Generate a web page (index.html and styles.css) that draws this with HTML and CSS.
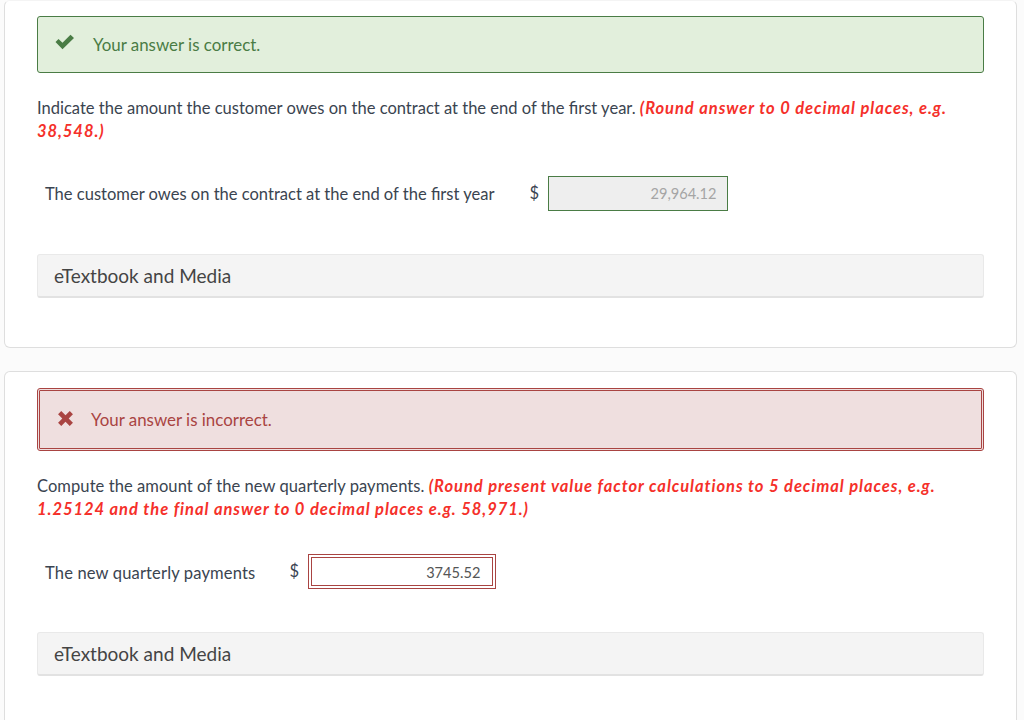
FILE: index.html
```html
<!DOCTYPE html>
<html lang="en">
<head>
<meta charset="utf-8">
<title>Answers</title>
<link rel="stylesheet" href="styles.css">
</head>
<body>
<section class="card card-first">
  <div class="alert alert-ok">
    <svg class="icon icon-check" viewBox="0 0 20 16" aria-hidden="true"><path d="M0.5 8 L3.5 5 L7.5 8.8 L15.5 0.8 L19 4 L7.5 15.2 Z"/></svg>
    <span class="alert-text">Your answer is correct.</span>
  </div>
  <p class="question">Indicate the amount the customer owes on the contract at the end of the first year. <em class="hint">(Round answer to 0 decimal places, e.g. 38,548.)</em></p>
  <div class="answer-row">
    <span class="answer-label">The customer owes on the contract at the end of the first year</span>
    <span class="dollar">$</span>
    <div class="field field-ok">29,964.12</div>
  </div>
  <div class="media">eTextbook and Media</div>
</section>
<section class="card card-second">
  <div class="alert alert-bad">
    <svg class="icon icon-cross" viewBox="0 0 16 16" aria-hidden="true"><path d="M1 4 L4 1 L8 5 L12 1 L15 4 L11 8 L15 12 L12 15 L8 11 L4 15 L1 12 L5 8 Z"/></svg>
    <span class="alert-text">Your answer is incorrect.</span>
  </div>
  <p class="question">Compute the amount of the new quarterly payments. <em class="hint">(Round present value factor calculations to 5 decimal places, e.g. 1.25124 and the final answer to 0 decimal places e.g. 58,971.)</em></p>
  <div class="answer-row">
    <span class="answer-label">The new quarterly payments</span>
    <span class="dollar">$</span>
    <div class="field field-bad">3745.52</div>
  </div>
  <div class="media">eTextbook and Media</div>
</section>
</body>
</html>
```
FILE: styles.css
```css
html, body {
  margin: 0;
  height: 720px;
  overflow: hidden;
}
body {
  background: #fbfbfb;
  padding: 0 7px 0 4px;
  font-family: Lato, "Liberation Sans", sans-serif;
  font-size: 16.55px;
  line-height: 23px;
  color: #3a4450;
}
.card {
  background: #fff;
  border: 1px solid #dedede;
  border-radius: 6px;
  padding: 0 32px;
  box-sizing: border-box;
}
.card-first {
  height: 348px;
  padding-top: 15px;
  border-top-color: #f4f4f4;
}
.card-first .dollar { margin-left: 35px; }
.card-second {
  margin-top: 23px;
  height: 349px;
  padding-top: 16px;
  border-bottom: none;
  border-radius: 6px 6px 0 0;
}
.card-second .question { letter-spacing: 0.06px; }
.card-second .answer-label { letter-spacing: 0.15px; margin-top: 4px; }
.alert {
  display: flex;
  align-items: center;
  box-sizing: border-box;
  border-radius: 3px;
  font-size: 16.9px;
}
.alert-ok {
  height: 57px;
  padding-left: 17px;
  background: #e2efdc;
  border: 1px solid #4a7c45;
  color: #4a7c45;
}
.alert-ok .alert-text { margin-left: 18px; }
.alert-bad {
  height: 63px;
  padding-left: 17px;
  background: #efdfdf;
  border: 3px double #a94442;
  color: #a94442;
}
.alert-bad .alert-text { margin-left: 17px; }
.icon { display: block; fill: currentColor; }
.icon-check { width: 20px; height: 16px; margin-top: -6px; }
.icon-cross { width: 17px; height: 17px; margin-top: -2px; }
.question { margin: 24px 0 0; }
.hint {
  font-weight: 700;
  font-style: italic;
  color: #f5302a;
  letter-spacing: 0.93px;
}
.answer-row {
  display: flex;
  align-items: center;
  height: 35px;
  margin-top: 33px;
  padding-left: 8px;
}
.answer-label { margin-top: 2px; }
.dollar { margin-left: 34px; width: 19px; }
.field {
  box-sizing: border-box;
  height: 35px;
  line-height: 34px;
  text-align: right;
  font-size: 14.6px;
}
.field-ok {
  width: 180px;
  padding-right: 11px;
  background: #eee;
  border: 1px solid #4a7c45;
  color: #a5a5a5;
}
.field-bad {
  width: 188px;
  padding-right: 12px;
  background: #fff;
  border: 4px double #a94442;
  line-height: 29px;
  color: #555;
}
.media {
  box-sizing: border-box;
  height: 44px;
  margin-top: 43px;
  padding-left: 16px;
  line-height: 41px;
  font-size: 19px;
  color: #444;
  background: #f4f4f4;
  border: 1px solid #e9e9e9;
  border-bottom: 2px solid #e2e2e2;
  border-radius: 3px;
}
```
